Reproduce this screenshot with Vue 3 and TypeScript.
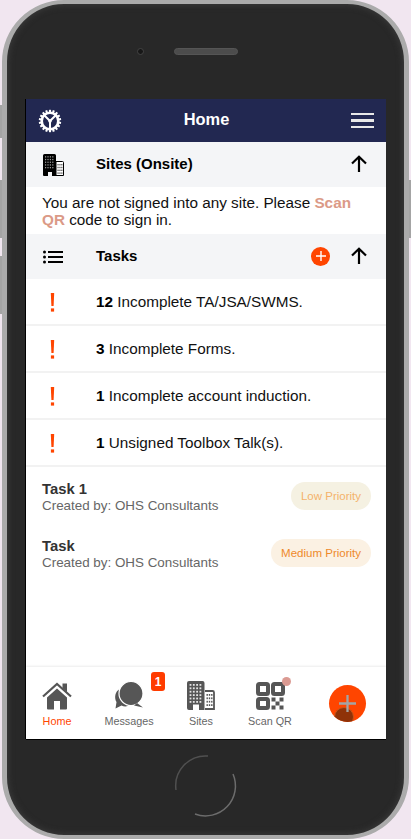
<script setup lang="ts">
const items = [
  { n: '12', t: ' Incomplete TA/JSA/SWMS.' },
  { n: '3', t: ' Incomplete Forms.' },
  { n: '1', t: ' Incomplete account induction.' },
  { n: '1', t: ' Unsigned Toolbox Talk(s).' },
]
const teeth = Array.from({ length: 18 }, (_, i) => i * 20)
</script>

<template>
  <div class="page">
    <span class="side s1"></span><span class="side s2"></span><span class="side s3"></span><span class="side s4"></span>
    <div class="phone">
      <div class="top">
        <span class="cam"></span>
        <span class="speaker"></span>
      </div>
      <div class="screen">
        <header class="bar">
          <svg class="gear" width="24" height="24" viewBox="0 0 24 24" fill="none" stroke="#fff">
            <line v-for="a in teeth" :key="a" x1="12" y1="0.8" x2="12" y2="3.500" stroke-width="2.100" :transform="`rotate(${a} 12 12)`" />
            <circle cx="12" cy="12" r="8.300" stroke-width="2.600" />
            <path d="M12 12L6.500 6.500M12 12l5.500-5.500M12 12v7.500" stroke-width="2" />
            <circle cx="12" cy="12" r="1.800" fill="#fff" stroke="none" />
          </svg>
          <span class="title">Home</span>
          <div class="burger"><i></i><i></i><i></i></div>
        </header>

        <section class="head">
          <span class="lead">
            <svg width="21" height="22" viewBox="0 0 21 22">
              <path d="M1.500 0h10a1.500 1.500 0 0 1 1.500 1.500V22H9v-4H5v4H1a1 1 0 0 1-1-1V1.500A1.500 1.500 0 0 1 1.500 0z" fill="#000" />
              <g fill="#9a9a9a"><rect v-for="c in 20" :key="c" :x="2 + ((c - 1) % 4) * 2.400" :y="2.200 + Math.floor((c - 1) / 4) * 2.700" width="1.200" height="1.300" /></g>
              <path d="M13 7.500h6.500a1 1 0 0 1 1 1v13H13z" fill="#fff" stroke="#000" stroke-width="1" />
              <g fill="#444"><rect v-for="c in 12" :key="c" :x="14.500 + ((c - 1) % 3) * 1.900" :y="10 + Math.floor((c - 1) / 3) * 2.800" width="1.100" height="1.400" /></g>
            </svg>
          </span>
          <span class="htitle">Sites (Onsite)</span>
          <svg class="arrow" width="18" height="18" viewBox="0 0 18 18" fill="none" stroke="#000" stroke-width="2.200"><path d="M9 17V2M2 8.500L9 1.800l7 6.700" /></svg>
        </section>
        <p class="notice">You are not signed into any site. Please <b>Scan</b> <b>QR</b> code to sign in.</p>

        <section class="head">
          <span class="lead">
            <svg width="20" height="14" viewBox="0 0 20 14" fill="#000">
              <circle cx="1.500" cy="2" r="1.500" /><circle cx="1.500" cy="7" r="1.500" /><circle cx="1.500" cy="12" r="1.500" />
              <rect x="5" y="1" width="15" height="2" /><rect x="5" y="6" width="15" height="2" /><rect x="5" y="11" width="15" height="2" />
            </svg>
          </span>
          <span class="htitle">Tasks</span>
          <span class="addsm">
            <svg width="10" height="10" viewBox="0 0 10 10" stroke="#fff" stroke-width="1.400"><path d="M5 0v10M0 5h10" /></svg>
          </span>
          <svg class="arrow" width="18" height="18" viewBox="0 0 18 18" fill="none" stroke="#000" stroke-width="2.200"><path d="M9 17V2M2 8.500L9 1.800l7 6.700" /></svg>
        </section>

        <div v-for="(it, i) in items" :key="i" class="alert">
          <svg class="bang" width="5" height="19" viewBox="0 0 5 19" fill="#ff4500"><path d="M0.800 0h3.400l-.6 13H1.400z" /><rect x="0.900" y="15.400" width="3.200" height="3.200" /></svg>
          <span class="atext"><b>{{ it.n }}</b>{{ it.t }}</span>
        </div>

        <div class="task first">
          <div class="tinfo"><b>Task 1</b><span>Created by: OHS Consultants</span></div>
          <span class="pill low">Low Priority</span>
        </div>
        <div class="task">
          <div class="tinfo"><b>Task</b><span>Created by: OHS Consultants</span></div>
          <span class="pill med">Medium Priority</span>
        </div>

        <div class="spacer"></div>

        <nav class="tabs">
          <div class="tab active">
            <svg width="30" height="29" viewBox="0 0 30 29" fill="#565656">
              <path d="M15 7.500L5 16.500v11a1 1 0 0 0 1 1h6v-8.500h6v8.500h6a1 1 0 0 0 1-1v-11z" />
              <path d="M1 15.500L15 3l14 12.500" fill="none" stroke="#565656" stroke-width="2.200" />
              <path d="M20.500 2.500h4.500v8.800l-4.500-4z" />
            </svg>
            <span>Home</span>
          </div>
          <div class="tab">
            <svg width="30" height="29" viewBox="0 0 30 29" fill="#565656">
              <path d="M6 8C1 10 0 17 2.500 21L1.500 27.500l6-3c2.500 1.300 6 1.300 8-.4C10 23 5 17 6 8z" />
              <circle cx="17" cy="12.500" r="12" stroke="#fff" stroke-width="1.200" />
              <path d="M23 22l6 4.500-9-2z" />
            </svg>
            <span>Messages</span>
            <em class="badge">1</em>
          </div>
          <div class="tab">
            <svg width="28" height="29" viewBox="0 0 28 29">
              <path d="M2 0h13.500a2 2 0 0 1 2 2v27H12v-5.500H6V29H2a2 2 0 0 1-2-2V2a2 2 0 0 1 2-2z" fill="#565656" />
              <g fill="#e4e4e4"><rect v-for="c in 24" :key="c" :x="2.600 + ((c - 1) % 4) * 3.300" :y="3 + Math.floor((c - 1) / 4) * 3.400" width="1.800" height="1.800" /></g>
              <path d="M18 10h7.500a1.500 1.500 0 0 1 1.500 1.500V28H18" fill="#fff" stroke="#565656" stroke-width="1.800" />
              <g fill="#565656"><rect v-for="c in 12" :key="c" :x="19.500 + ((c - 1) % 3) * 2.300" :y="13 + Math.floor((c - 1) / 3) * 3.400" width="1.400" height="1.800" /></g>
            </svg>
            <span>Sites</span>
          </div>
          <div class="tab">
            <svg width="29" height="29" viewBox="0 0 29 29" fill="none" stroke="#565656" stroke-width="4">
              <rect x="2" y="3" width="10" height="10" rx="1.500" />
              <rect x="17" y="3" width="10" height="10" rx="1.500" />
              <rect x="2" y="18" width="10" height="9" rx="1.500" />
              <g fill="#565656" stroke="none">
                <rect x="15.500" y="16.500" width="4" height="4" /><rect x="23.500" y="16.500" width="4" height="4" />
                <rect x="19.500" y="20.500" width="4" height="4" /><rect x="15.500" y="24.500" width="4" height="4" /><rect x="23.500" y="24.500" width="4" height="4" />
              </g>
            </svg>
            <span>Scan QR</span>
            <em class="dot"></em>
          </div>
          <div class="tab fabwrap">
            <div class="fab">
              <span class="ripple"></span>
              <svg class="plus" width="17" height="17" viewBox="0 0 17 17" stroke="#a4a4a4" stroke-width="2.300"><path d="M8.500 0v17M0 8.500h17" /></svg>
            </div>
          </div>
        </nav>
      </div>
      <div class="bottom">
        <svg class="homebtn" width="64" height="64" viewBox="0 0 64 64" fill="none" stroke-width="1.500">
          <path d="M2 36A30 30 0 0 1 34 2" stroke="#505050" />
          <path d="M59 20A30 30 0 0 1 21 60" stroke="#6c6c6c" />
        </svg>
      </div>
    </div>
  </div>
</template>

<style>
html, body { margin: 0; background: #f1e6f0; }
</style>

<style scoped>
.page {
  position: relative;
  width: 411px;
  height: 839px;
  overflow: hidden;
  background: #f1e6f0;
  font-family: "Liberation Sans", Arial, sans-serif;
}
.side { position: absolute; width: 3px; background: #a4a4a4; }
.s1 { left: 0; top: 105px; height: 33px; }
.s2 { left: 0; top: 180px; height: 58px; }
.s3 { left: 0; top: 256px; height: 58px; }
.s4 { right: 0; top: 180px; height: 58px; }
.phone {
  position: relative;
  box-sizing: border-box;
  width: 407px;
  height: 839px;
  margin-left: 2px;
  border-radius: 62px;
  background: #282828;
  border: 5px solid #ababab;
  border-top-width: 4px;
  border-bottom-width: 4px;
  padding-top: 95px;
  padding-left: 19px;
  box-shadow: inset 0 0 6px 1px #3c3c3c;
  display: flex;
  flex-direction: column;
}
.top { height: 0; position: relative; }
.cam {
  position: absolute; left: 111px; top: -51px; width: 7px; height: 7px; border-radius: 50%;
  background: #171717; border: 1px solid #444; box-sizing: border-box;
}
.speaker {
  position: absolute; left: 148px; top: -51px; width: 64px; height: 7px; border-radius: 4px;
  background: #4c4c4c; border: 1px solid #555; box-sizing: border-box;
}
.screen {
  width: 360px;
  height: 640px;
  background: #fff;
  display: flex;
  flex-direction: column;
  box-shadow: -1px 0 0 #000, 0 1px 0 #000;
}
.bar {
  height: 43px;
  flex: none;
  background: #222851;
  display: flex;
  align-items: center;
  justify-content: space-between;
  padding: 0 12px;
}
.title { color: #fff; font-weight: 700; font-size: 16.400px; margin-top: -2px; }
.burger { display: flex; flex-direction: column; gap: 4px; width: 23px; }
.burger i { display: block; height: 2.500px; background: #e8e8e8; }
.head {
  height: 45px;
  flex: none;
  background: #f4f5f7;
  display: flex;
  align-items: center;
  padding-left: 16px;
}
.lead { width: 54px; display: flex; align-items: center; padding-left: 1px; box-sizing: border-box; }
.htitle { font-weight: 700; font-size: 15px; color: #000; flex: 1; margin-top: -2px; }
.arrow { margin: -2px 18px 0 0; }
.addsm {
  width: 19px; height: 19px; border-radius: 50%; background: #ff4500;
  display: flex; align-items: center; justify-content: center; margin: -1px 20px 0 0;
}
.notice {
  margin: 0;
  height: 47px;
  flex: none;
  box-sizing: border-box;
  padding: 7px 16px 0;
  font-size: 15.300px;
  line-height: 17px;
  color: #111;
}
.notice b { color: #db9a87; }
.alert {
  height: 47px;
  flex: none;
  box-sizing: border-box;
  border-bottom: 2px solid #f2f2f2;
  display: flex;
  align-items: center;
  padding-left: 24px;
}
.bang { margin: 1px 41px 0 0; }
.atext { font-size: 15.300px; color: #111; }
.atext b { color: #000; }
.task {
  height: 57px;
  flex: none;
  box-sizing: border-box;
  display: flex;
  align-items: center;
  justify-content: space-between;
  padding: 0 15px 0 16px;
}
.task.first { margin-top: 1px; }
.tinfo { display: flex; flex-direction: column; }
.tinfo b { font-size: 14.800px; color: #333; line-height: 17px; }
.tinfo span { font-size: 13.400px; color: #666; line-height: 15px; }
.pill {
  height: 28px;
  border-radius: 14px;
  display: flex;
  align-items: center;
  padding: 0 10px;
  font-size: 11.500px;
  margin-top: -2px;
}
.low { background: #f5f1e2; color: #f4b36b; }
.med { background: #fbf1e3; color: #ee8a2b; }
.spacer { flex: 1; }
.tabs {
  height: 72px;
  flex: none;
  display: grid;
  grid-template-columns: 62px 82px 62px 76px 78px;
  box-shadow: 0 -1px 2px rgba(0, 0, 0, .08);
  background: #fff;
}
.tab {
  position: relative;
  display: flex;
  flex-direction: column;
  align-items: center;
  padding-top: 14px;
  box-sizing: border-box;
  font-size: 10.800px;
  color: #666;
}
.tab svg { display: block; }
.tab span { margin-top: 5px; line-height: 13px; }
.tab.active span { color: #ff4500; }
.badge {
  position: absolute; left: 63px; top: 5px; width: 14px; height: 19px; border-radius: 3px;
  background: #ff3c00; color: #fff; font-style: normal; font-weight: 700; font-size: 12px;
  display: flex; align-items: center; justify-content: center;
}
.dot { position: absolute; left: 50px; top: 10px; width: 9px; height: 9px; border-radius: 50%; background: #db9a92; }
.fabwrap { padding-top: 18px; }
.fab {
  position: relative; width: 37px; height: 37px; border-radius: 50%; background: #ff4500; overflow: hidden;
}
.ripple {
  position: absolute; left: 5px; top: 17px; margin: 0; width: 20px; height: 20px; border-radius: 50%;
  background: #8f3208; border: 1px solid #c8561a; box-sizing: border-box;
}
.fab .plus { position: absolute; left: 10px; top: 10px; }
.bottom { position: relative; height: 0; }
.homebtn { position: absolute; left: 148px; top: 15px; }
</style>
